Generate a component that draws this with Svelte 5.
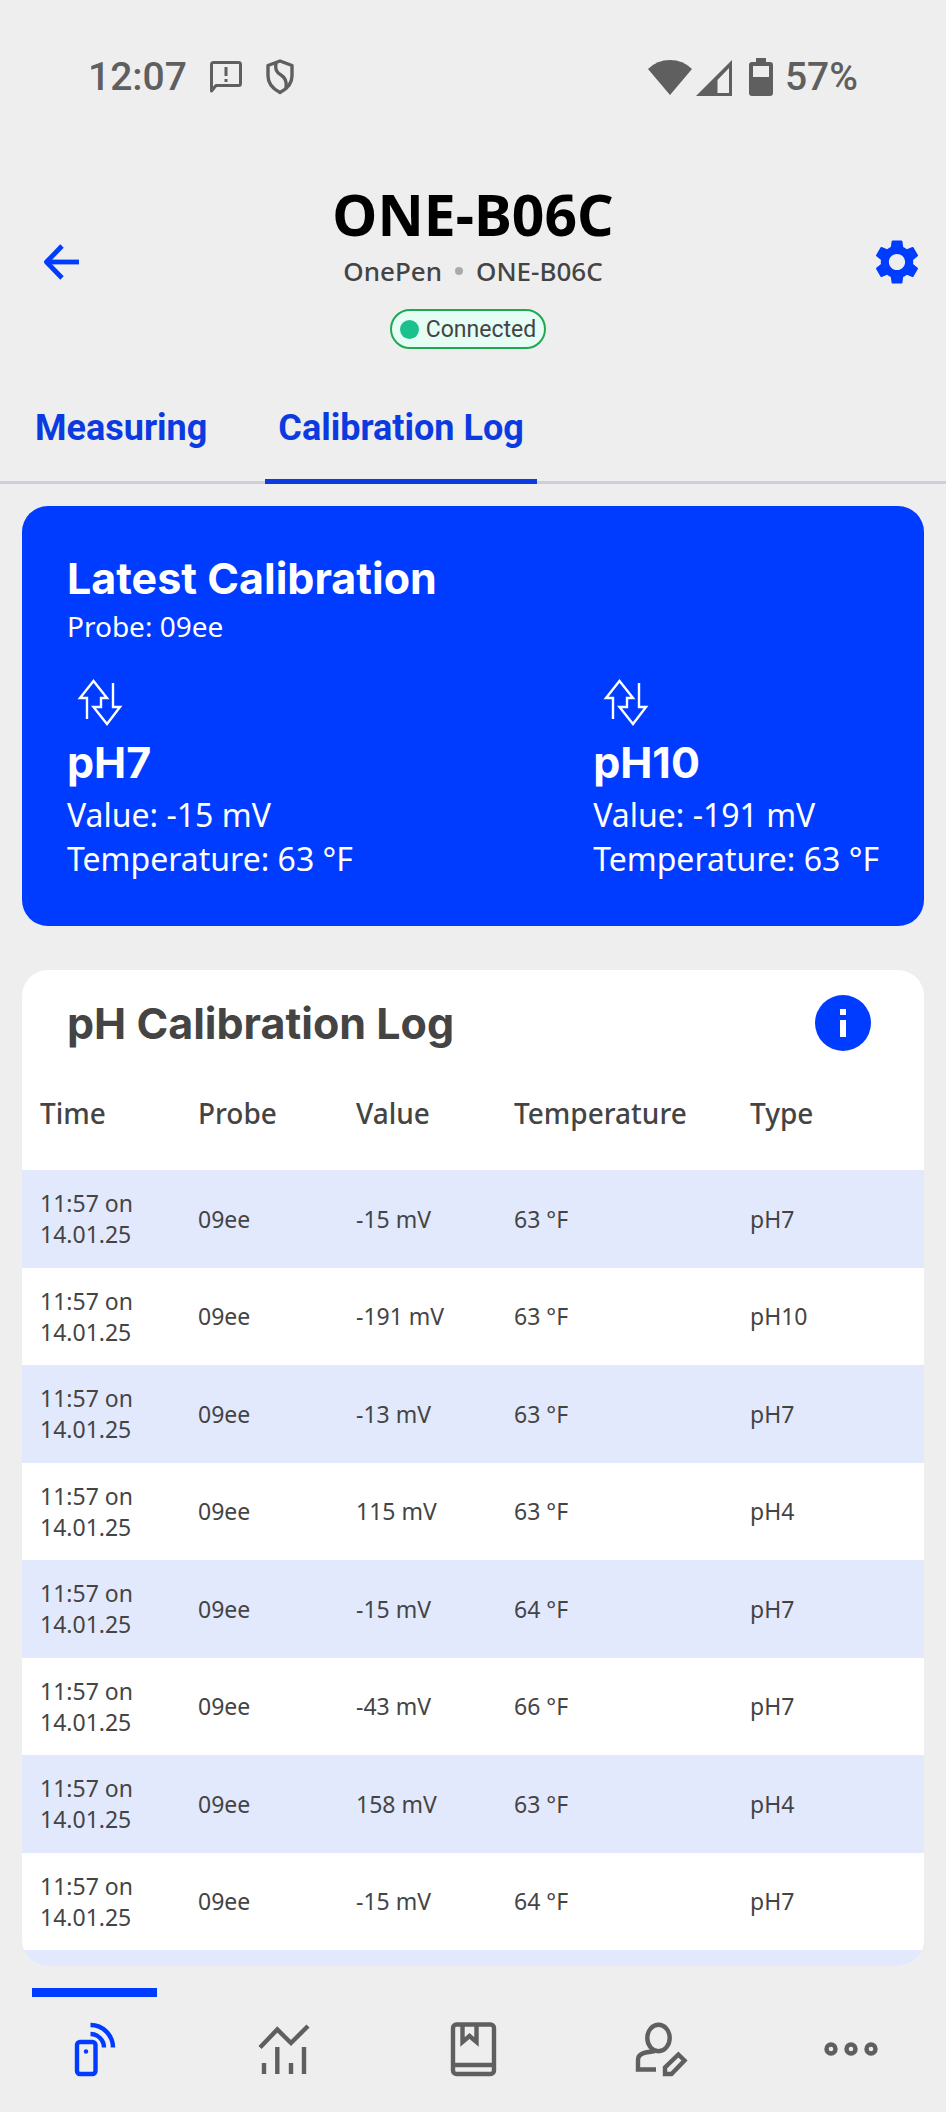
<script>
  let tab = $state("log");
  let page = $state("devices");

  const tabs = [
    { id: "measuring", label: "Measuring" },
    { id: "log", label: "Calibration Log" },
  ];

  const latest = [
    { type: "pH7", value: "-15 mV", temp: "63 °F" },
    { type: "pH10", value: "-191 mV", temp: "63 °F" },
  ];

  const rows = [
    { value: "-15 mV", temp: "63 °F", type: "pH7" },
    { value: "-191 mV", temp: "63 °F", type: "pH10" },
    { value: "-13 mV", temp: "63 °F", type: "pH7" },
    { value: "115 mV", temp: "63 °F", type: "pH4" },
    { value: "-15 mV", temp: "64 °F", type: "pH7" },
    { value: "-43 mV", temp: "66 °F", type: "pH7" },
    { value: "158 mV", temp: "63 °F", type: "pH4" },
    { value: "-15 mV", temp: "64 °F", type: "pH7" },
  ].map((r) => ({ time: "11:57 on", date: "14.01.25", probe: "09ee", ...r }));

  const nav = ["devices", "charts", "logbook", "profile", "more"];
</script>

<div class="app">
  <div class="status">
    <div class="status-group left">
      <span class="clock">12:07</span>
      <svg width="34" height="36" viewBox="0 0 34 36" fill="none" stroke="currentColor" stroke-width="3">
        <path d="M2.5 32V5.5q0-2 2-2h25q2 0 2 2v19q0 2-2 2H7z" stroke-linejoin="round" />
        <path d="M17 8v9M17 20v3" />
      </svg>
      <svg width="30" height="38" viewBox="0 0 30 38" fill="none" stroke="currentColor" stroke-width="3.4" stroke-linejoin="round">
        <path d="M15 3 27 7.5V18c0 8-5 13-12 16.5C8 31 3 26 3 18V7.5z" />
        <path d="M11 5c-1 6 0 9 5 12s6 7 5 13" />
      </svg>
    </div>
    <div class="status-group right">
      <svg width="44" height="38" viewBox="0 0 44 38" fill="currentColor">
        <path d="M0 11Q9 2 22 2t22 9L22 37z" />
      </svg>
      <svg width="37" height="38" viewBox="0 0 37 38" fill="currentColor" fill-rule="evenodd">
        <path d="M36 2v36H0zM33 10 21.5 22v13H33z" />
      </svg>
      <svg class="battery" width="24" height="38" viewBox="0 0 24 38" fill="currentColor" fill-rule="evenodd">
        <path d="M7 0h10v4h4q3 0 3 3v28q0 3-3 3H3q-3 0-3-3V7q0-3 3-3h4zM4 8v11h16V8z" />
      </svg>
      <span class="clock">57%</span>
    </div>
  </div>

  <header class="head">
    <button class="icon-btn back" aria-label="Back">
      <svg width="40" height="40" viewBox="0 0 40 40" fill="none" stroke="currentColor" stroke-width="4.8">
        <path d="M37 20H5" />
        <path d="M20 4 4.500 20 20 36" stroke-linejoin="round" />
      </svg>
    </button>
    <div class="head-text">
      <h1>ONE-B06C</h1>
      <p class="sub"><span>OnePen</span><i class="sep"></i><span>ONE-B06C</span></p>
      <div class="chip"><i class="dot"></i>Connected</div>
    </div>
    <button class="icon-btn gear" aria-label="Settings">
      <svg width="54" height="54" viewBox="0 0 24 24" fill="currentColor">
        <path d="M19.14 12.94c.04-.3.06-.61.06-.94 0-.32-.02-.64-.07-.94l2.03-1.58c.18-.14.23-.41.12-.61l-1.92-3.32c-.12-.22-.37-.29-.59-.22l-2.39.96c-.5-.38-1.03-.7-1.62-.94l-.36-2.54c-.04-.24-.24-.41-.48-.41h-3.84c-.24 0-.43.17-.47.41l-.36 2.54c-.59.24-1.13.57-1.62.94l-2.39-.96c-.22-.08-.47 0-.59.22L2.74 8.87c-.12.21-.08.47.12.61l2.03 1.58c-.05.3-.09.63-.09.94s.02.64.07.94l-2.03 1.58c-.18.14-.23.41-.12.61l1.92 3.32c.12.22.37.29.59.22l2.39-.96c.5.38 1.03.7 1.62.94l.36 2.54c.05.24.24.41.48.41h3.84c.24 0 .44-.17.47-.41l.36-2.54c.59-.24 1.13-.56 1.62-.94l2.39.96c.22.08.47 0 .59-.22l1.92-3.32c.12-.22.07-.47-.12-.61l-2.01-1.58zM12 15.6c-1.98 0-3.6-1.62-3.6-3.6s1.62-3.6 3.6-3.6 3.6 1.62 3.6 3.6-1.62 3.6-3.6 3.6z" />
      </svg>
    </button>
  </header>

  <div class="tabs" role="tablist">
    {#each tabs as t}
      <button class="tab" class:active={tab === t.id} role="tab" aria-selected={tab === t.id} onclick={() => (tab = t.id)}>{t.label}</button>
    {/each}
  </div>

  <section class="card latest">
    <h2>Latest Calibration</h2>
    <p class="probe">Probe: 09ee</p>
    <div class="points">
      {#each latest as p}
        <div class="point">
          <svg width="64" height="48" viewBox="0 0 64 48" fill="none" stroke="currentColor" stroke-width="2.4">
            <path d="M20 41V20h-7L26.5 3 40 20h-6v9h-7.5L40 46l13-17h-7V5" />
          </svg>
          <h3>{p.type}</h3>
          <p>Value: {p.value}</p>
          <p>Temperature: {p.temp}</p>
        </div>
      {/each}
    </div>
  </section>

  <section class="card log">
    <div class="log-head">
      <h2>pH Calibration Log</h2>
      <button class="icon-btn info" aria-label="Info">
        <svg width="56" height="56" viewBox="0 0 56 56">
          <circle cx="28" cy="28" r="28" fill="#003cff" />
          <path d="M25 14h6v6h-6zM25 25h6v17h-6z" fill="#fff" />
        </svg>
      </button>
    </div>
    <table>
      <thead>
        <tr>
          <th class="c-sm">Time</th>
          <th class="c-sm">Probe</th>
          <th class="c-sm">Value</th>
          <th class="c-lg">Temperature</th>
          <th>Type</th>
        </tr>
      </thead>
      <tbody>
        {#each rows as r}
          <tr>
            <td>{r.time}<br />{r.date}</td>
            <td>{r.probe}</td>
            <td>{r.value}</td>
            <td>{r.temp}</td>
            <td>{r.type}</td>
          </tr>
        {/each}
      </tbody>
    </table>
    <div class="log-rest"></div>
  </section>

  <nav class="nav">
    {#each nav as n}
      <button class="nav-item" class:active={page === n} aria-label={n} onclick={() => (page = n)}>
        <svg width="64" height="64" viewBox="0 0 64 64" fill="none" stroke="currentColor" stroke-width="4.4">
          {#if n === "devices"}
            <rect x="14" y="25" width="18.5" height="32" rx="3" />
            <circle cx="23" cy="34.5" r="2.2" fill="currentColor" stroke="none" />
            <path d="M27.5 8A22.5 22.5 0 0 1 50 30.5M27.5 17A13.5 13.5 0 0 1 41 30.5" />
          {:else if n === "charts"}
            <path d="M8 30.5 25.3 12.5 39 26 56 9" />
            <path d="M12 46v11M25.3 30v27M39 46v11M52 30v27" />
          {:else if n === "logbook"}
            <rect x="12" y="7.5" width="41" height="49.5" rx="3.5" />
            <path d="M12 48h41M21.5 8v17l7-6 7 6V8" />
          {:else if n === "profile"}
            <ellipse cx="28.5" cy="21" rx="11.2" ry="13.2" />
            <path d="M25 34C14 35.5 8 36.5 8 43v9.5h18" />
            <path d="M48.4 37.5 54.5 43.5 41.5 57H35v-6.5z" />
          {:else}
            <circle cx="12" cy="32" r="4.5" />
            <circle cx="32" cy="32" r="4.5" />
            <circle cx="52" cy="32" r="4.5" />
          {/if}
        </svg>
      </button>
    {/each}
  </nav>
</div>

<style>
  :global(body) { background: #eee; }
  .app { display: flex; flex-direction: column; min-height: 100vh; color: #444; font-family: "Noto Sans", sans-serif; }
  h1, h2, h3, p { margin: 0; }
  button { background: none; border: none; padding: 0; cursor: pointer; font: inherit; color: inherit; }
  svg { display: block; }

  .status { display: flex; justify-content: space-between; padding: 53px 88px 73px; color: #5f5f5f; }
  .status-group { display: flex; align-items: center; height: 48px; }
  .left { gap: 22px; }
  .right { gap: 4px; }
  .battery { margin: 0 8px 0 12px; }
  .clock { font-family: Roboto, sans-serif; font-size: 39px; font-weight: 500; line-height: 48px; }

  .head { display: grid; grid-template-columns: 1fr auto 1fr; align-items: center; padding: 0 22px; }
  .icon-btn { display: block; color: #003cff; }
  .back { justify-self: start; margin-left: 20px; }
  .gear { justify-self: end; }
  .head-text { display: flex; flex-direction: column; align-items: center; padding-top: 8px; }
  h1 { font-size: 57px; line-height: 64px; font-weight: 700; color: #000; }
  .sub { display: flex; align-items: center; gap: 13px; margin-top: 7px; font-size: 26px; line-height: 36px; font-weight: 500; }
  .sep { width: 8px; height: 8px; border-radius: 50%; background: #aaa; }
  .chip { display: flex; align-items: center; gap: 7px; box-sizing: border-box; height: 40px; margin: 20px 10px 0 0; padding: 0 8px; border: 2px solid #1fa850; border-radius: 20px; background: #e6fdf5; font-family: Roboto, sans-serif; font-size: 23px; }
  .dot { width: 19px; height: 19px; border-radius: 50%; background: #1bc08d; }

  .tabs { display: flex; gap: 45px; margin-top: 31px; padding-left: 22px; border-bottom: 3px solid #cfcfd8; }
  .tab { margin-bottom: -3px; padding: 26px 13px 29px; border-bottom: 5px solid transparent; color: #0b3be0; font-family: Roboto, sans-serif; font-size: 36px; line-height: 44px; font-weight: 700; }
  .tab.active { border-color: #0b3be0; }

  .card { margin: 0 22px; border-radius: 26px; overflow: hidden; }
  h2, h3 { font-family: Inter, sans-serif; font-size: 43px; line-height: 48px; font-weight: 700; }
  .latest { margin-top: 22px; padding: 48px 45px 45px; background: #003cff; color: #fff; }
  .probe { margin-top: 6px; font-size: 28px; line-height: 36px; }
  .points { display: flex; justify-content: space-between; margin-top: 34px; }
  .point h3 { margin: 12px 0 7px; }
  .point p { font-size: 32px; line-height: 44px; }

  .log { display: flex; flex-direction: column; flex: 1; margin-top: 44px; background: #fff; }
  .log-head { display: flex; align-items: center; justify-content: space-between; padding: 25px 53px 4px 45px; }
  table { width: 100%; table-layout: fixed; border-collapse: collapse; }
  th, td { padding: 0 0 0 18px; text-align: left; }
  th { height: 115px; font-size: 28px; font-weight: 500; }
  td { height: 97px; font-size: 23px; line-height: 31px; }
  .c-sm { width: 140px; }
  .c-lg { width: 218px; }
  tbody tr:nth-child(odd) { background: #e3e9fd; }
  tbody tr:nth-child(odd) td { height: 98px; }
  .log-rest { flex: 1; background: #e3e9fd; }

  .nav { display: grid; grid-template-columns: repeat(5, 1fr); margin-top: 22px; padding-bottom: 31px; color: #5f5f5f; }
  .nav-item { display: flex; flex-direction: column; align-items: center; gap: 20px; }
  .nav-item::before { content: ""; width: 66%; height: 9px; }
  .nav-item.active { color: #003cff; }
  .nav-item.active::before { background: #003cff; }
</style>
